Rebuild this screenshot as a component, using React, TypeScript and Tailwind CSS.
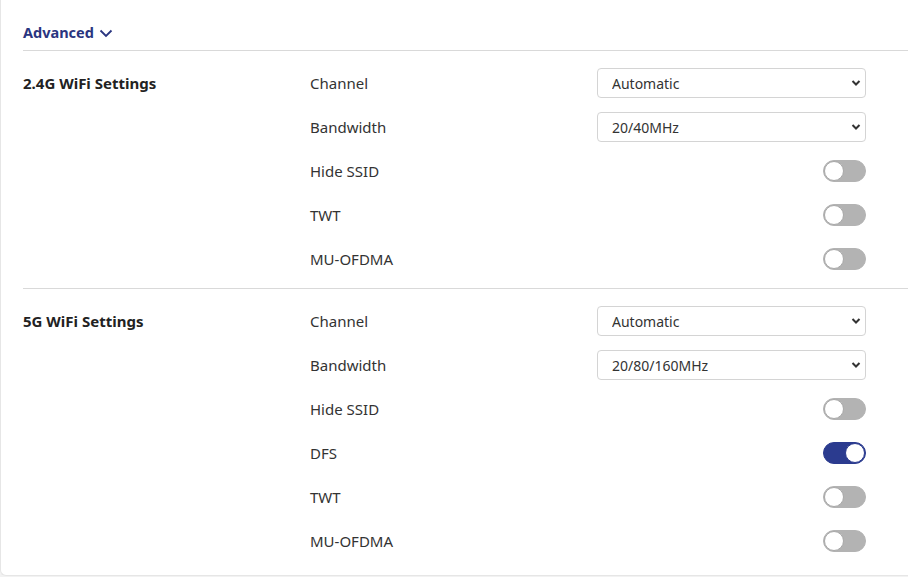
import { useState } from "react";

type Row =
  | { label: string; kind: "select"; value: string; options: string[] }
  | { label: string; kind: "toggle"; on: boolean };

const sections: { title: string; rows: Row[] }[] = [
  {
    title: "2.4G WiFi Settings",
    rows: [
      { label: "Channel", kind: "select", value: "Automatic", options: ["Automatic", "1", "6", "11"] },
      { label: "Bandwidth", kind: "select", value: "20/40MHz", options: ["20MHz", "20/40MHz"] },
      { label: "Hide SSID", kind: "toggle", on: false },
      { label: "TWT", kind: "toggle", on: false },
      { label: "MU-OFDMA", kind: "toggle", on: false },
    ],
  },
  {
    title: "5G WiFi Settings",
    rows: [
      { label: "Channel", kind: "select", value: "Automatic", options: ["Automatic", "36", "149"] },
      { label: "Bandwidth", kind: "select", value: "20/80/160MHz", options: ["20MHz", "20/40MHz", "20/80/160MHz"] },
      { label: "Hide SSID", kind: "toggle", on: false },
      { label: "DFS", kind: "toggle", on: true },
      { label: "TWT", kind: "toggle", on: false },
      { label: "MU-OFDMA", kind: "toggle", on: false },
    ],
  },
];

function Toggle({ initial }: { initial: boolean }) {
  const [on, setOn] = useState(initial);
  return (
    <button
      type="button"
      onClick={() => setOn(!on)}
      className={`relative h-[22px] w-[43px] rounded-full border ${
        on ? "bg-[#2b3b8f] border-[#2b3b8f]" : "bg-[#b3b3b3] border-[#b3b3b3]"
      }`}
    >
      <span
        className={`absolute top-0 h-5 w-5 rounded-full bg-white ${
          on ? "right-0 border border-[#2b3b8f]" : "left-0 border border-[#a8a8a8]"
        }`}
      />
    </button>
  );
}

function Select({ value, options }: { value: string; options: string[] }) {
  return (
    <div className="relative w-[269px]">
      <select
        defaultValue={value}
        className="h-[30px] w-full appearance-none rounded-[4px] border border-[#d4d4d4] bg-white pl-[14px] text-[14px] text-[#333]"
      >
        {options.map((o) => (
          <option key={o}>{o}</option>
        ))}
      </select>
      <svg
        className="pointer-events-none absolute right-[5px] top-[11px] h-[8px] w-[10px] text-[#333]"
        viewBox="0 0 10 8"
        fill="none"
        stroke="currentColor"
        strokeWidth={2}
      >
        <path d="M1.5 2l3.5 3.5L8.5 2" />
      </svg>
    </div>
  );
}

export default function App() {
  return (
    <div className="h-[577px] w-[908px] bg-[#f2f2f2] font-['Noto_Sans','Open_Sans',sans-serif]">
      <div className="h-[576px] rounded-bl-md border-b border-l border-[#e6e6e6] bg-white pl-[22px]">
        <div className="flex h-[50px] items-center gap-[5px] pt-[16px] text-[14.5px] font-bold text-[#2a3580]">
          Advanced
          <svg className="h-[10px] w-[14px]" viewBox="0 0 14 10" fill="none" stroke="currentColor" strokeWidth={1.8}>
            <path d="M1.5 2.5l5.5 5.5 5.5-5.5" />
          </svg>
        </div>
        {sections.map((s, i) => (
          <div key={s.title} className={`flex border-t border-[#d9d9d9] pt-[10px] ${i === 0 ? "pb-[7px]" : ""}`}>
            <div className="w-[287px] pt-[11px] text-[15px] font-bold leading-[22px] text-[#222]">{s.title}</div>
            <div className="flex w-[556px] flex-col">
              {s.rows.map((r) => (
                <div key={r.label} className="flex h-[44px] items-center justify-between">
                  <span className="text-[15px] text-[#333]">{r.label}</span>
                  {r.kind === "select" ? <Select value={r.value} options={r.options} /> : <Toggle initial={r.on} />}
                </div>
              ))}
            </div>
          </div>
        ))}
      </div>
    </div>
  );
}
